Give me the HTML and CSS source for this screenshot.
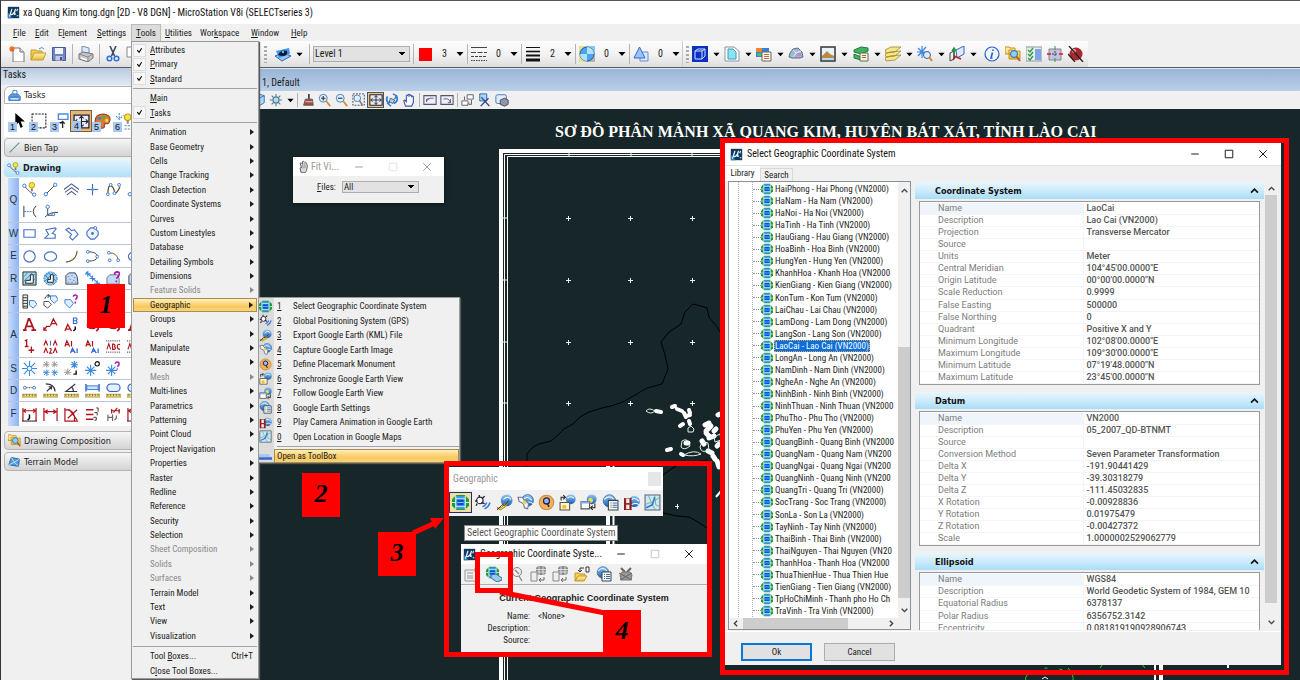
FILE: index.html
```html
<!DOCTYPE html>
<html lang="en">
<head>
<meta charset="utf-8">
<title>xa Quang Kim tong.dgn - MicroStation V8i</title>
<link rel="stylesheet" href="styles.css">
</head>
<body>
<svg class="defs" aria-hidden="true">
<defs>
<linearGradient id="gball" x1="0" y1="0" x2="0" y2="1"><stop offset="0" stop-color="#8fc8f4"/><stop offset="1" stop-color="#1c5fb4"/></linearGradient>
<linearGradient id="gyel" x1="0" y1="0" x2="0" y2="1"><stop offset="0" stop-color="#fff3b0"/><stop offset="1" stop-color="#e9b93a"/></linearGradient>
<symbol id="logo" viewBox="0 0 16 16"><path d="M1 1h14v14H1z" fill="#0f3a5f"/><path d="M1 15V8l6 7z" fill="#2f7fb5"/><path d="M3 13 6 3.500M6 4 4.500 9q0 2 2 1.500Q9 9 10.500 3.500L9 9.500q0 1.500 2 0M13 3.500l-1 3M12 12h2" fill="none" stroke="#e8f6ff" stroke-width="1.400"/></symbol>
<symbol id="globe" viewBox="0 0 16 16"><path d="M4 1h8l4 4v6l-4 4H4l-4-4V5z" fill="#1f9a3c"/><path d="M4 2h8v12H4z" fill="#3f9cf4"/><path d="M5 5h6v6H5z" fill="#0b4fd8"/><path d="M3.500 1.500v13M12.500 1.500v13M0 8h3M13 8h3M4 4.500h8M4 11.500h8" stroke="#d4f4f8" stroke-width="1"/><path d="M5 8h6" stroke="#7fc0ff"/></symbol>
<symbol id="earth" viewBox="0 0 16 16"><circle cx="8" cy="8" r="6.500" fill="url(#gball)" stroke="#1c5596"/><path d="M3 6q5-5 9 1M3 10q5-4 10 0" fill="none" stroke="#fff" stroke-width="1.300"/></symbol>
<symbol id="gps" viewBox="0 0 16 16"><circle cx="5.500" cy="6" r="3" fill="#fff" stroke="#334" stroke-width="1.200"/><path d="M1 7l2-1M8 4l2-2M5 3V1M3 9l-1 2M7 8l3 1" fill="none" stroke="#223" stroke-width="1.300"/><path d="M8 12q3-1 4-4M10 14q4-2 5-6" fill="none" stroke="#3a76d8" stroke-width="1.400"/></symbol>
<symbol id="kml" viewBox="0 0 16 16"><circle cx="10" cy="6" r="5.500" fill="url(#gball)"/><path d="M7 5q4-4 7 0" stroke="#fff" fill="none"/><path d="M1 13q5 1 6-3l4-2-2 4-5 3z" fill="#ffd93a" stroke="#9c7a10" stroke-width=".8"/><path d="M1 15l5-5 2 1 4-5" fill="none" stroke="#222" stroke-width=".8"/></symbol>
<symbol id="cap" viewBox="0 0 16 16"><circle cx="10" cy="6" r="5.500" fill="url(#gball)" stroke="#1c5596" stroke-width=".6"/><path d="M6 5q4-4 8 1M7 9q4-3 8 0" stroke="#fff" fill="none"/><path d="M1 3h4l2 3 4 3-1 5-3-1-1-4-4-2z" fill="#eef3fb" stroke="#678"/><circle cx="7" cy="8" r="1.800" fill="#f4d44a"/></symbol>
<symbol id="pin" viewBox="0 0 16 16"><circle cx="8" cy="8" r="6.800" fill="#f2b05a" stroke="#d08a34"/><circle cx="8" cy="6.500" r="2.800" fill="#9fb4e8" stroke="#18265c" stroke-width="1.200"/><path d="M8.500 9l2 3" stroke="#18265c" stroke-width="1.300"/></symbol>
<symbol id="sync" viewBox="0 0 16 16"><circle cx="11" cy="5" r="4.600" fill="url(#gball)"/><path d="M8 4q3-3 6 0" stroke="#fff" fill="none"/><path d="M1 8h9v7H1z" fill="#fdf6c8" stroke="#555"/><circle cx="5" cy="12" r="2" fill="#f0c030"/><path d="M2 6V3h3M4 1l2 2-2 2" fill="none" stroke="#222"/></symbol>
<symbol id="follow" viewBox="0 0 16 16"><circle cx="11" cy="5" r="4.600" fill="url(#gball)"/><circle cx="10" cy="6" r="2.200" fill="#f6dc4c"/><path d="M1 7h8v7H1z" fill="#fff" stroke="#555"/><path d="M1 7h8v2H1z" fill="#8ab0e8"/><path d="M14 9v4h-3M12 11l-2 2 2 2" fill="none" stroke="#222"/></symbol>
<symbol id="gset" viewBox="0 0 16 16"><circle cx="7" cy="6.500" r="5.800" fill="url(#gball)" stroke="#1c5596" stroke-width=".6"/><path d="M2 5q5-5 9 0" stroke="#fff" fill="none"/><path d="M6 6h9v9H6z" fill="#fffbe0" stroke="#345"/><path d="M8 8.500h1M8 10.500h1M8 12.500h1M10 8.500h4M10 10.500h4M10 12.500h4" stroke="#36c"/></symbol>
<symbol id="film" viewBox="0 0 16 16"><circle cx="10.500" cy="7" r="5.300" fill="url(#gball)"/><path d="M7 6q4-4 8 1M8 10q4-2 7 0" stroke="#fff" fill="none"/><path d="M1 4h7v11H1z" fill="#b02020"/><path d="M3 4.500h3v4H3zM3 10h3v4H3z" fill="#eee"/><path d="M1.500 4v11M7.500 4v11" stroke="#222" stroke-dasharray="1 1"/></symbol>
<symbol id="gmap" viewBox="0 0 16 16"><path d="M1 1h14v14H1z" fill="#cfe6f8" stroke="#567"/><path d="M1 10 6 8l5 7M4 1l3 7 8-5M10 1l1 9 4 2" fill="none" stroke="#6aaa7a" stroke-width=".8"/><path d="M2 13l6-3 2-7" fill="none" stroke="#2d78d8" stroke-width="1.500"/></symbol>
<symbol id="tbx" viewBox="0 0 16 16"><path d="M0 5h16v7H0z" fill="#a9c5ee"/><path d="M0 9h16v3H0z" fill="#3a6ac0"/><path d="M13 4h3v4h-3z" fill="#dde"/></symbol>
<symbol id="new" viewBox="0 0 16 16"><path d="M4 2h7l4 4v10H4z" fill="#fff" stroke="#777"/><path d="M11 2v4h4" fill="#dde" stroke="#777"/><path d="M3 0v6M0 3h6M1 1l4 4M5 1 1 5" stroke="#f06a1a" stroke-width="1.200"/></symbol>
<symbol id="open" viewBox="0 0 16 16"><path d="M1 14V4h5l1 1h5v2" fill="#f3cf57" stroke="#c49a28"/><path d="M1 14 4 7h12l-3 7z" fill="url(#gyel)" stroke="#c49a28"/><path d="M9 3q3-3 5 0" fill="none" stroke="#5a87c8"/></symbol>
<symbol id="save" viewBox="0 0 16 16"><path d="M1.500 1.500h13v13h-13z" fill="#7285c6" stroke="#4b5a96"/><path d="M4 2h8v6H4z" fill="#f3f5fa"/><path d="M4.500 10h7v4.500h-7z" fill="#c6cbdd"/><path d="M9 11h2v3H9z" fill="#44507e"/></symbol>
<symbol id="print" viewBox="0 0 16 16"><path d="M4 7V0l7 2v5z" fill="#dbe9fb" stroke="#7a8aa0"/><path d="M1 8l4-2 10 2v4l-5 4-9-3z" fill="#c4c6ca" stroke="#777"/><path d="M1 8l9 3 5-3M10 11v5" fill="none" stroke="#888"/><path d="M3 12l6 2" stroke="#fff" stroke-width="1.500"/></symbol>
<symbol id="cut" viewBox="0 0 16 16"><path d="M5 0l4.500 10M11 0 6.500 10" stroke="#3c4a60" stroke-width="1.600"/><circle cx="4.500" cy="12.500" r="2.300" fill="none" stroke="#2a6fd8" stroke-width="1.500"/><circle cx="11.500" cy="12.500" r="2.300" fill="none" stroke="#2a6fd8" stroke-width="1.500"/></symbol>
<symbol id="copy" viewBox="0 0 16 16"><path d="M1 1h8v10H1zM6 5h8v10H6z" fill="#fff" stroke="#888"/></symbol>
<symbol id="modelv" viewBox="0 0 16 16"><path d="M0 10l8-3 8 3-9 5z" fill="#9cc5f4" stroke="#2a68c8"/><path d="M1 5l13-3 1 6-11 4z" fill="#3f96ea"/><path d="M3 9q3-6 9-4 1 4-3 5-4 0-6-1z" fill="#111a30"/><circle cx="8" cy="6" r="1.200" fill="#5cb8ff"/></symbol>
<symbol id="lstyle" viewBox="0 0 16 16"><path d="M0 1.500h16" stroke="#444"/><path d="M0 6.500h16" stroke="#444" stroke-dasharray="5 1.500"/><path d="M0 10.500h16" stroke="#444" stroke-dasharray="3 1"/><path d="M0 14.500h16" stroke="#444" stroke-dasharray="1.500 1"/></symbol>
<symbol id="lweight" viewBox="0 0 16 16"><path d="M1 1.500h14" stroke="#111"/><path d="M1 5.500h14" stroke="#111" stroke-width="1.600"/><path d="M1 9.500h14" stroke="#111" stroke-width="2"/><path d="M1 14h14" stroke="#111" stroke-width="3"/></symbol>
<symbol id="transp" viewBox="0 0 16 16"><path d="M0 0h16v16H0z" fill="#e8dc90"/><path d="M8 0h8v8H8z" fill="#8ec6f2"/><path d="M8 8h8v8H8z" fill="#b8b4a8"/><circle cx="8" cy="8" r="7" fill="#49a6ee" stroke="#1460a8"/><path d="M8 1a7 7 0 0 1 7 7H8zM8 15a7 7 0 0 1-7-7h7z" fill="#b4e0ff"/></symbol>
<symbol id="prio" viewBox="0 0 16 16"><path d="M7 6h8v9H7z" fill="#dbe8fb" stroke="#6b8fd0"/><path d="M6.500 1 12 12H1z" fill="#9cc4f4" stroke="#2e6cd0"/></symbol>
<symbol id="cube" viewBox="0 0 16 16"><path d="M0 0h16v16H0z" fill="#0c2fc4"/><path d="M3 5h7v8H3zM6 3h7v7l-3 3M10 5l3-2M3 5l3-2" fill="none" stroke="#cfe4ff"/></symbol>
<symbol id="page" viewBox="0 0 16 16"><path d="M1 1h9l5 4v10H1z" fill="#fff" stroke="#8a94a0"/><path d="M4 3h5l3 3v7H4z" fill="#8fe3ec" stroke="#3a9cc0"/></symbol>
<symbol id="refs" viewBox="0 0 16 16"><path d="M0 2h13v9H0z" fill="#3f7fd0"/><path d="M0 2h6v4H0z" fill="#e9863a"/><path d="M1 7h6v3H1z" fill="#52b86c"/><path d="M6 6h9v9H6z" fill="#fffbe0" stroke="#666"/><path d="M8 8.500h5M8 10.500h5M8 12.500h5" stroke="#c66"/></symbol>
<symbol id="cloud" viewBox="0 0 16 16"><path d="M1 11l1-4 3-4 5-1 4 4 1 5-3 1H4z" fill="#9db7ce" stroke="#5c6f8c"/><path d="M5 4l3 3 5-2M8 7l-3 4" fill="none" stroke="#e4f1fb"/><path d="M9 7h4v3H9z" fill="#c28ac8"/></symbol>
<symbol id="raster" viewBox="0 0 16 16"><path d="M1 1h14v14H1z" fill="#e8f4fb" stroke="#333" stroke-width="1.500"/><path d="M2 10 7 5l3 3 4 2v2H2z" fill="#b98b3a"/><path d="M2 12h12v2H2z" fill="#b8dcf4"/></symbol>
<symbol id="db" viewBox="0 0 16 16"><path d="M1 4l7-3 7 1v3L8 8 1 6zM1 8l7 3v3l-7-2z" fill="#3fb45c" stroke="#1e7a38"/><path d="M7 7h8v8H7z" fill="#fdf5c0" stroke="#666"/><path d="M9 9.500h4M9 11.500h4" stroke="#777"/></symbol>
<symbol id="levels" viewBox="0 0 16 16"><path d="M0 12l5-2 11-1-6 5-9 1zM0 8l5-2 11-1-6 5-9 1zM0 4l6-3 10 0-6 5-9 1z" fill="#f7e589" stroke="#9c8830" stroke-width=".8"/></symbol>
<symbol id="snap" viewBox="0 0 16 16"><path d="M5 0v12M0 6h12M1 2l9 9M9 1 1 10" stroke="#3a86e0" stroke-width="1.200"/><circle cx="10" cy="9" r="3.500" fill="#d8ecfb" stroke="#46608a"/><path d="M12.500 11.500 15 15" stroke="#d08a2a" stroke-width="2"/></symbol>
<symbol id="acs" viewBox="0 0 16 16"><path d="M7 4l8-4v8l-7 4z" fill="#dfeafc" stroke="#3a60d0"/><path d="M5 12V3M3 5l2-3 2 3" fill="none" stroke="#1d9a30" stroke-width="1.400"/><path d="M5 10l7 3M4 14l2-3" stroke="#c22" stroke-width="1.500"/><path d="M1 7l4-2v8l-4 2z" fill="none" stroke="#444"/></symbol>
<symbol id="info" viewBox="0 0 16 16"><circle cx="8" cy="8" r="7" fill="#eef5ff" stroke="#2a5fc4" stroke-width="1.200"/><path d="M9 3.500v1.500M8.500 6.500 7 12h1.500" fill="none" stroke="#2a5fc4" stroke-width="1.600"/></symbol>
<symbol id="search" viewBox="0 0 16 16"><path d="M0 1h4l1 1h5v6H0zM4 4h4l1 1h6v8H4z" fill="url(#gyel)" stroke="#c68f1c"/><circle cx="9" cy="8" r="3.500" fill="#8fd0f2" stroke="#2568b0"/><path d="M11.500 10.500 15 15" stroke="#b8621c" stroke-width="2"/></symbol>
<symbol id="opts" viewBox="0 0 16 16"><path d="M0 1h16v14H0z" fill="#e8eef0" stroke="#899"/><path d="M9 3h6v11H9z" fill="#7fa4e8"/><path d="M2 4l2 2 3-4M2 8l2 2 3-4M2 12l2 2 3-4" fill="none" stroke="#2e9a3a" stroke-width="1.300"/></symbol>
<symbol id="fence" viewBox="0 0 16 16"><path d="M2 3h12v11H2z" fill="#c4c0ea" stroke="#887"/><path d="M8 0v4M8 12v4" stroke="#2aa040"/><path d="M0 8h4M12 8h4" stroke="#d02020" stroke-width="1.500"/><path d="M8 5v6M5 8h6" stroke="#444" stroke-dasharray="2 1"/></symbol>
<symbol id="nored" viewBox="0 0 16 16"><circle cx="8" cy="8" r="6.500" fill="#a82832"/><circle cx="6" cy="5" r="2" fill="#f0a0a0"/><path d="M1 0l14 16M0 8l7 8" stroke="#222" stroke-width="1.300"/></symbol>
<symbol id="viewc" viewBox="0 0 16 16"><path d="M1 4l6-3 7 2v8l-6 4-7-2z" fill="#a9d4f5" stroke="#2a6cc0"/><path d="M1 4l7 2 6-3M8 6v9" fill="none" stroke="#2a6cc0"/></symbol>
<symbol id="sun" viewBox="0 0 16 16"><circle cx="8" cy="8" r="3.500" fill="#b9dcec" stroke="#527a94" stroke-width="1.300"/><path d="M8 1v3M8 12v3M1 8h3M12 8h3M3 3l2 2M11 11l2 2M13 3l-2 2M5 11l-2 2" stroke="#527a94" stroke-width="1.200"/></symbol>
<symbol id="brush" viewBox="0 0 16 16"><path d="M8 1h2v6H8z" fill="#444"/><path d="M5 7h8l1 7H3z" fill="#a84a3a" stroke="#555"/><path d="M5 10h8" stroke="#dde"/></symbol>
<symbol id="zin" viewBox="0 0 16 16"><circle cx="6" cy="6" r="4.500" fill="#dff0fb" stroke="#3c78b8"/><path d="M3.500 6h5M6 3.500v5" stroke="#333" stroke-width="1.300"/><path d="M9.500 9.500 14 15" stroke="#d88a38" stroke-width="2"/></symbol>
<symbol id="zout" viewBox="0 0 16 16"><circle cx="6" cy="6" r="4.500" fill="#dff0fb" stroke="#3c78b8"/><path d="M3.500 6h5" stroke="#333" stroke-width="1.300"/><path d="M9.500 9.500 14 15" stroke="#d88a38" stroke-width="2"/></symbol>
<symbol id="zwin" viewBox="0 0 16 16"><path d="M1 1h13v13H1z" fill="none" stroke="#333" stroke-dasharray="2 1.500"/><circle cx="6" cy="6" r="3.800" fill="#dff0fb" stroke="#3c78b8"/><path d="M8.500 8.500 12 14" stroke="#888" stroke-width="2"/></symbol>
<symbol id="fit" viewBox="0 0 16 16"><path d="M1 2h14v12H1z" fill="#e9ecf4" stroke="#223" stroke-width="1.200"/><path d="M8 3v10M2 8h12M6 5l2-2 2 2M6 11l2 2 2-2M4 6 2 8l2 2M12 6l2 2-2 2" fill="none" stroke="#223"/></symbol>
<symbol id="rot" viewBox="0 0 16 16"><path d="M3 4q-3 5 2 8M13 3q3 6-3 9" fill="none" stroke="#2f7cd8" stroke-width="2"/><path d="M9 1l4 2-2 4M7 15l-4-3 4-3" fill="none" stroke="#2f7cd8" stroke-width="1.500"/><path d="M6 6l5 2-2 4-4-2z" fill="#a9d4f5" stroke="#456"/></symbol>
<symbol id="hand" viewBox="0 0 16 16"><path d="M4 15 2 9l1-1 2 2V3q1-1 2 0V2q1-1 2 0v1q1-1 2 0v1q1-1 2 0v7l-2 4z" fill="#f4f8ff" stroke="#4558b0" stroke-width="1.300"/></symbol>
<symbol id="handg" viewBox="0 0 16 16"><path d="M6 15l-1-5 1-1 1 1-2-6q1-1 2 0l1 1V2q1-1 2 0l1 1q1-1 2 1l1 3-1 6-2 3z" fill="#d8d8d8" stroke="#666" stroke-width="1.200"/><path d="M8 5l1 5M11 4v6" stroke="#888"/></symbol>
<symbol id="vprev" viewBox="0 0 16 16"><path d="M1 3h14v10H1z" fill="#eef" stroke="#556" stroke-width="1.200"/><path d="M4 10V7h3M4 10q1-5 8-4" fill="none" stroke="#556"/></symbol>
<symbol id="vnext" viewBox="0 0 16 16"><path d="M1 3h14v10H1z" fill="#eef" stroke="#556" stroke-width="1.200"/><path d="M12 7v4H9M12 11Q10 5 4 7" fill="none" stroke="#556"/></symbol>
<symbol id="vcopy" viewBox="0 0 16 16"><path d="M1 9h7v5H1zM7 2h7v5H7z" fill="#fff" stroke="#556"/><path d="M4 8V4M12 8v5H9M10 11l-2 2" fill="none" stroke="#556"/></symbol>
<symbol id="clip" viewBox="0 0 16 16"><path d="M2 1h8v8H2z" fill="#a9d4f5" stroke="#2a5ca8"/><path d="M4 5l9 10M12 6l-9 9" stroke="#29408a" stroke-width="1.500"/></symbol>
<symbol id="mask" viewBox="0 0 16 16"><rect x="1" y="2" width="12" height="10" rx="2" fill="#e0ecfb" stroke="#3a6cc0"/><path d="M6 8l5-2 4 2v5l-4 2-5-2z" fill="#8f98a6" stroke="#445"/></symbol>
<symbol id="cursor" viewBox="0 0 16 16"><path d="M5 0v12l3-3 2 5 2-1-2-5h4z" fill="#000"/></symbol>
<symbol id="fenc" viewBox="0 0 16 16"><path d="M1 1h13v13H1z" fill="none" stroke="#222" stroke-dasharray="2 1"/></symbol>
<symbol id="manip" viewBox="0 0 16 16"><path d="M6 1h9v5H6z" fill="#fff" stroke="#4a8cd8" stroke-width="1.300"/><path d="M7 9h4M10 14V8M8 10l2-2 2 2" fill="none" stroke="#222" stroke-width="1.200"/></symbol>
<symbol id="palette" viewBox="0 0 16 16"><path d="M1 8q0-7 8-7 7 1 6 6-1 4-4 3-2 0-1 3-1 2-4 1-5-1-5-6z" fill="#d9793a" stroke="#8a4420"/><circle cx="5" cy="5" r="1.500" fill="#38c"/><circle cx="9" cy="4" r="1.500" fill="#4b4"/><circle cx="12" cy="7" r="1.500" fill="#fd4"/></symbol>
<symbol id="bulb" viewBox="0 0 16 16"><circle cx="12" cy="4" r="3" fill="#ffe23c" stroke="#b89a10"/><path d="M11 7h2v3h-2z" fill="#888"/><path d="M1 3l3 3 4-4M4 0v6M9 12h6M9 15h6" fill="none" stroke="#48c" stroke-dasharray="2 1"/></symbol>
<symbol id="tasks" viewBox="0 0 16 16"><path d="M1 9l3-3h8l3 3v5H1z" fill="#5c9be0" stroke="#2d68b8"/><path d="M6 6V2h5v4M3 10h10" fill="none" stroke="#2d68b8"/><path d="M3 11h10v2H3z" fill="#cfe4fa"/></symbol>
<symbol id="diag" viewBox="0 0 16 16"><path d="M2 14 14 2" stroke="#4f9a90" stroke-width="1.300"/></symbol>
<symbol id="smart" viewBox="0 0 16 16"><path d="M2 4l6 6 5 4" fill="none" stroke="#444"/><circle cx="2.500" cy="4" r="1.800" fill="#fff" stroke="#3a76e0"/><circle cx="13" cy="13.500" r="1.800" fill="#fff" stroke="#3a76e0"/><circle cx="10.500" cy="3.500" r="3" fill="#ffe23c" stroke="#b89a10"/><path d="M9.500 7h2v3h-2z" fill="#777"/></symbol>
<symbol id="line" viewBox="0 0 16 16"><path d="M3 13 13 3" stroke="#444"/><circle cx="3" cy="13" r="1.800" fill="#fff" stroke="#3a76e0"/><circle cx="13" cy="3" r="1.800" fill="#fff" stroke="#3a76e0"/></symbol>
<symbol id="multi" viewBox="0 0 16 16"><path d="M0 8l8-6 8 6M1 11l7-5 7 5M3 14l5-4 5 4" fill="none" stroke="#46587e" stroke-width="1.100"/></symbol>
<symbol id="point" viewBox="0 0 16 16"><path d="M8 2v12M2 8h12" stroke="#3a6ac0" stroke-width="1.200"/><path d="M6 8l2-2 2 2-2 2z" fill="#5a86d0"/></symbol>
<symbol id="curve" viewBox="0 0 16 16"><path d="M2 14Q2 3 5 4t4 6 6-5" fill="none" stroke="#5a4a20" stroke-width="1.300"/><g fill="#fff" stroke="#3a76e0"><circle cx="2" cy="13" r="1.500"/><circle cx="5" cy="3" r="1.500"/><circle cx="9" cy="12" r="1.500"/><circle cx="14" cy="3" r="1.500"/></g></symbol>
<symbol id="con" viewBox="0 0 16 16"><path d="M2 2v12" stroke="#333"/><path d="M2 8h8" stroke="#3a76e0" stroke-dasharray="2 1"/><path d="M15 2q-6 6 0 12" fill="none" stroke="#333"/></symbol>
<symbol id="perp" viewBox="0 0 16 16"><path d="M5 3v9M2 14q6-6 14-5M5 12h7" fill="none" stroke="#345"/><g fill="#fff" stroke="#3a76e0"><circle cx="5" cy="3" r="1.800"/><circle cx="11" cy="11" r="1.500"/></g></symbol>
<symbol id="rect" viewBox="0 0 16 16"><path d="M2 4h12v8H2z" fill="none" stroke="#4570c8" stroke-width="1.200"/></symbol>
<symbol id="shape" viewBox="0 0 16 16"><path d="M3 4l10-2 1 1-4 5 3 1v4H2l4-4z" fill="none" stroke="#4570c8" stroke-width="1.200"/></symbol>
<symbol id="ortho" viewBox="0 0 16 16"><path d="M2 4l3-2 3 3 3-1 4 5-6 6-3-3 2-3z" fill="none" stroke="#4570c8" stroke-width="1.200"/></symbol>
<symbol id="poly" viewBox="0 0 16 16"><path d="M6 2h4l4 4v4l-4 4H6l-4-4V6z" fill="#eef4ff" stroke="#4570c8" stroke-width="1.200"/><circle cx="8" cy="8" r="1.500" fill="#4570c8"/><circle cx="11" cy="2" r="1.500" fill="#fff" stroke="#4570c8"/></symbol>
<symbol id="circ" viewBox="0 0 16 16"><circle cx="8" cy="8" r="6" fill="#fff" stroke="#4570c8" stroke-width="1.200"/></symbol>
<symbol id="ell" viewBox="0 0 16 16"><ellipse cx="8" cy="8" rx="6.500" ry="5" fill="#fff" stroke="#4570c8" stroke-width="1.200"/></symbol>
<symbol id="arc" viewBox="0 0 16 16"><path d="M14 2q-1 11-12 12" fill="none" stroke="#6a5a28" stroke-width="1.200"/></symbol>
<symbol id="harc" viewBox="0 0 16 16"><path d="M3 3q10 0 10 5t-10 5" fill="none" stroke="#444"/><g fill="#fff" stroke="#3a76e0"><circle cx="3" cy="3" r="1.500"/><circle cx="13" cy="8" r="1.500"/><circle cx="3" cy="13" r="1.500"/></g></symbol>
<symbol id="qarc" viewBox="0 0 16 16"><path d="M3 4q9 0 10 8" fill="none" stroke="#6a5a28"/><g fill="#fff" stroke="#3a76e0"><circle cx="3" cy="4" r="1.500"/><circle cx="13" cy="12" r="1.500"/><circle cx="4" cy="12" r="1.500"/></g></symbol>
<symbol id="hatch" viewBox="0 0 16 16"><path d="M1 1h14v14H1z" fill="#a6dcea" stroke="#222"/><path d="M2 6l4-4M2 11l9-9M3 14 14 3M8 14l6-6" stroke="#3a80c8"/><path d="M9 4h3v9H4v-3h5z" fill="#fff" stroke="#222"/></symbol>
<symbol id="xhatch" viewBox="0 0 16 16"><circle cx="8" cy="8" r="7" fill="#9cd2f0" stroke="#2f6fc0" stroke-dasharray="2 1"/><path d="M2 6l4-4M2 11l9-9M3 14 14 3M2 4l9 10M6 2l8 9" stroke="#3a80c8"/><path d="M8 4h3v8H5v-3h3z" fill="#fff" stroke="#222"/></symbol>
<symbol id="patt" viewBox="0 0 16 16"><path d="M2 14V5l3-3h7l2 4 1 8z" fill="#c3daf2" stroke="#345"/><path d="M4 6h1M8 5h1M11 7h1M6 9h1M10 10h1M4 12h1M8 12h1M12 12h1" stroke="#3a6ac0"/></symbol>
<symbol id="lpatt" viewBox="0 0 16 16"><path d="M1 1l14 13M3 0v6M0 3h6M8 5v6M5 8h6M13 10v6M10 13h6" stroke="#3a86e0" stroke-width="1.200"/></symbol>
<symbol id="qpatt" viewBox="0 0 16 16"><path d="M1 14V7l3-3h8l2 4v6z" fill="#c3daf2" stroke="#678"/><path d="M9 4q0-3 3-3t2 3q0 2-3 4M11 10v2" fill="none" stroke="#a818b0" stroke-width="1.800"/></symbol>
<symbol id="tag1" viewBox="0 0 16 16"><path d="M1 1h5v14H1zM1 4h5M1 7h5M1 10h5M1 13h5" fill="#eee" stroke="#333"/><path d="M8 7h5l3 4-4 4-4-3z" fill="#dff0ff" stroke="#3a76e0"/></symbol>
<symbol id="tag2" viewBox="0 0 16 16"><path d="M1 8h5l3 3-4 4-4-3z" fill="#fff" stroke="#444"/><path d="M8 2h6l2 4-4 4-4-4z" fill="#dff0ff" stroke="#3a76e0"/><path d="M2 5q1-4 5-3M5 0l2 2-2 2" fill="none" stroke="#222"/></symbol>
<symbol id="tag3" viewBox="0 0 16 16"><path d="M1 6h6l3 4-4 5-5-5z" fill="#dff0ff" stroke="#3a76e0"/><path d="M10 3q0-2 2-2t2 2q0 2-2 3M12 8v2" fill="none" stroke="#a818b0" stroke-width="1.600"/></symbol>
<symbol id="ared" viewBox="0 0 16 16"><path d="M3 14 7 2h1l5 12M5 10h6M1 14h4M10 14h5" fill="none" stroke="#b0141c" stroke-width="1.800"/></symbol>
<symbol id="anote" viewBox="0 0 16 16"><path d="M8 9l3-7 4 7M9 7h4M8 10H4l-3 4M1 11v3h3" fill="none" stroke="#b0141c" stroke-width="1.400"/></symbol>
<symbol id="ab" viewBox="0 0 16 16"><path d="M1 15l3-7 4 7M2 13h4" fill="none" stroke="#b0141c" stroke-width="1.400"/><path d="M10 1v6h3q2-1 0-3 2-2 0-3zM10 4h3" fill="none" stroke="#2a62d8" stroke-width="1.100"/><path d="M12 10v3l-2 2" stroke="#111" stroke-width="1.600" fill="none"/></symbol>
<symbol id="cc" viewBox="0 0 16 16"><path d="M12 4Q5 1 3 7t8 5M14 10v3l-2 2" fill="none" stroke="#b0141c" stroke-width="1.800"/></symbol>
<symbol id="onep" viewBox="0 0 16 16"><path d="M3 2l2-1v7M3 8h4M10 8v7M7 12h6" fill="none" stroke="#b0141c" stroke-width="1.400"/></symbol>
<symbol id="a1a2" viewBox="0 0 16 16"><path d="M1 7l2-5 2 5M11 7l2-5 2 5" fill="none" stroke="#b0141c" stroke-width="1.200"/><path d="M1 15l2-5 2 5M7 10q3 0 1 3l-1 2h3M11 15l2-5 2 5" fill="none" stroke="#b0141c" stroke-width="1.200"/><path d="M8 2v5" stroke="#2a62d8"/></symbol>
<symbol id="a1b" viewBox="0 0 16 16"><path d="M1 8l2-6 3 6M2 6h3M8 2v6" fill="none" stroke="#b0141c" stroke-width="1.300"/><path d="M7 15l2-5 3 5M8 13h3M14 10v5" fill="none" stroke="#2a62d8" stroke-width="1.300"/></symbol>
<symbol id="abc" viewBox="0 0 16 16"><path d="M0 2h16M0 14h16" stroke="#222" stroke-dasharray="1 1"/><path d="M1 11l2-6 2 6M7 5v6h2q2-1 0-3 2-2-2-3M15 6q-3-1-3 2t3 3" fill="none" stroke="#b0141c" stroke-width="1.200"/></symbol>
<symbol id="star" viewBox="0 0 16 16"><path d="M8 0v16M0 8h16M2 2l12 12M14 2 2 14" stroke="#3a8ae0" stroke-width="1.200"/><circle cx="8" cy="8" r="2.500" fill="#e2f3ff" stroke="#3a8ae0"/></symbol>
<symbol id="star4" viewBox="0 0 16 16"><path d="M4 0v7M0 4h7M1 1l5 5M6 1 1 6M12 0v7M9 4h7M10 1l5 5M15 1l-5 5" stroke="#9a9690"/><path d="M4 9v7M0 12h7M1 10l5 5M6 10l-5 5M12 9v7M9 12h7M10 10l5 5M15 10l-5 5" stroke="#3a8ae0"/></symbol>
<symbol id="starc" viewBox="0 0 16 16"><path d="M11 0v8M7 4h8M8 1l6 6M14 1 8 7" stroke="#3a8ae0" stroke-width="1.200"/><path d="M4 8v7M0 12h8M1 9l6 6M7 9l-6 6" stroke="#9a9690"/><path d="M13 10v4h-3" fill="none" stroke="#111" stroke-width="1.500"/></symbol>
<symbol id="starq" viewBox="0 0 16 16"><path d="M6 4v12M0 10h12M2 6l8 8M10 6l-8 8" stroke="#3a8ae0" stroke-width="1.200"/><path d="M10 3q0-2 2-2t2 2q0 2-2 3M12 8v1" fill="none" stroke="#a818b0" stroke-width="1.600"/></symbol>
<symbol id="staro" viewBox="0 0 16 16"><path d="M6 4v12M0 10h12M2 6l8 8M10 6l-8 8" stroke="#3a8ae0" stroke-width="1.200"/><circle cx="13" cy="3" r="2.300" fill="none" stroke="#111" stroke-width="1.200"/></symbol>
<symbol id="ruler" viewBox="0 0 16 16"><path d="M0 12h16v3H0z" fill="#f6e27a" stroke="#b49a40"/><path d="M2 12v2M5 12v2M8 12v2M11 12v2M14 12v2" stroke="#765"/></symbol>
<symbol id="d1" viewBox="0 0 16 16"><use href="#ruler"/><path d="M4 5h8" stroke="#444" stroke-dasharray="2 1"/><g fill="#fff" stroke="#3a76e0"><circle cx="3" cy="5" r="1.500"/><circle cx="13" cy="5" r="1.500"/></g></symbol>
<symbol id="d2" viewBox="0 0 16 16"><use href="#ruler"/><path d="M3 1q9 0 10 8M4 9l5-5M9 7V4H6" fill="none" stroke="#334" stroke-width="1.300"/></symbol>
<symbol id="d3" viewBox="0 0 16 16"><use href="#ruler"/><path d="M12 1 2 9h12M8 4q2 2 2 5" fill="none" stroke="#334" stroke-width="1.200"/></symbol>
<symbol id="d4" viewBox="0 0 16 16"><use href="#ruler"/><path d="M1 1v8M15 1v8" stroke="#2a62c0" stroke-width="1.500"/><path d="M2 3h12v4H2z" fill="#cfe4fa" stroke="#3a76e0"/></symbol>
<symbol id="d5" viewBox="0 0 16 16"><use href="#ruler"/><rect x="1" y="1" width="14" height="8" rx="4" fill="#e4f0ff" stroke="#2a62c0" stroke-width="1.200"/></symbol>
<symbol id="f1" viewBox="0 0 16 16"><path d="M1 1v14M15 1v14M2 4h12M4 2 2 4l2 2M12 2l2 2-2 2" fill="none" stroke="#b0141c" stroke-width="1.300"/><path d="M8 8v4l-2 2" fill="none" stroke="#111" stroke-width="1.600"/><path d="M0 15h16" stroke="#111"/></symbol>
<symbol id="f2" viewBox="0 0 16 16"><path d="M1 1v14M15 1v14M2 5h12M5 3 2 5l3 2M11 3l3 2-3 2" fill="none" stroke="#b0141c" stroke-width="1.300"/></symbol>
<symbol id="f3" viewBox="0 0 16 16"><path d="M1 1v14h14M1 3h5l8 11M4 3q9 2 7 12M4 12 14 3" fill="none" stroke="#b0141c" stroke-width="1.300"/></symbol>
<symbol id="f4" viewBox="0 0 16 16"><path d="M1 3h8M1 8h8M1 13h8" stroke="#b0141c" stroke-width="1.500"/><path d="M12 1h2v4M10 6h3v3M9 11h3v3h-2" fill="none" stroke="#333"/></symbol>
<symbol id="f5" viewBox="0 0 16 16"><path d="M6 2v5M14 2v5M6 4h9M8 6l4-5" fill="none" stroke="#b0141c" stroke-width="1.300"/><path d="M2 8v7M7 8v7M2 11h5M11 9v3l-2 2" fill="none" stroke="#666" stroke-width="1.200"/></symbol>
<symbol id="terr" viewBox="0 0 16 16"><path d="M1 12 4 3l10 2-1 9z" fill="#4d9ad8" stroke="#1f5c9c"/><path d="M4 3l4 6 5 5M1 12l7-3 6-4" fill="none" stroke="#d4ecff"/></symbol>
<symbol id="pick" viewBox="0 0 16 16"><use href="#globe" width="13" height="13"/><path d="M5 9l5-1 6 4v2l-5 2-6-4z" fill="#9cc8ec" stroke="#356ca8"/></symbol>
<symbol id="gr1" viewBox="0 0 16 16"><path d="M1 4h11v11H1zM3 7h6M3 10h6M3 12h6M11 2h4v4h-4z" fill="#eee" stroke="#999"/></symbol>
<symbol id="gr2" viewBox="0 0 16 16"><circle cx="9" cy="6" r="4.500" fill="#eee" stroke="#888"/><path d="M5 9l-4 6M11 10l3 5M7 4l4 4" stroke="#888" stroke-width="1.300"/></symbol>
<symbol id="gr3" viewBox="0 0 16 16"><path d="M8 0h6l2 2v5l-2 2H8L6 7V2z" fill="#8a8a8a"/><path d="M6 3.500h10M6 6h10M9 0v9M13 0v9" stroke="#eee" stroke-width=".8"/><path d="M1 6h6v9H1z" fill="#eee" stroke="#888"/><path d="M9 14h5v-3M11 12l-2 2 2 2" fill="none" stroke="#666"/></symbol>
<symbol id="gr4" viewBox="0 0 16 16"><path d="M3 2l4 4M13 2 9 6" stroke="#666" stroke-width="2"/><path d="M4 6h8l2 3-1 5H3L2 9z" fill="#999" stroke="#777"/><path d="M1 7l13 7M14 7 2 14" stroke="#666"/></symbol>
<symbol id="fold2" viewBox="0 0 16 16"><path d="M1 15V7h4l1 1h5v3" fill="#f3cf57" stroke="#c49a28"/><path d="M1 15l3-5h9l-3 5z" fill="url(#gyel)" stroke="#c49a28"/><path d="M12 1h3v5h-3z" fill="#fff" stroke="#333"/><path d="M10 2H6v4M4 4l2 2 2-2" fill="none" stroke="#333"/></symbol>
<symbol id="min" viewBox="0 0 16 16"><path d="M2 8h12" stroke="currentColor" stroke-width="1.500"/></symbol>
<symbol id="max" viewBox="0 0 16 16"><path d="M2 2h12v12H2z" fill="none" stroke="currentColor" stroke-width="1.500"/></symbol>
<symbol id="cls" viewBox="0 0 16 16"><path d="M2 2l12 12M14 2 2 14" stroke="currentColor" stroke-width="1.500"/></symbol>
<symbol id="chev" viewBox="0 0 16 16"><path d="M3 11l5-5 5 5" fill="none" stroke="currentColor" stroke-width="2.500"/></symbol>
<symbol id="tri" viewBox="0 0 16 16"><path d="M1 4h14l-7 8z" fill="#000"/></symbol>
<symbol id="chk" viewBox="0 0 16 16"><path d="M3 7l4 5 6-9" fill="none" stroke="#000" stroke-width="2.500"/></symbol>
</defs>
</svg>

<div class="app">
  <header class="titlebar"><svg class="s12"><use href="#logo"/></svg><h1>xa Quang Kim tong.dgn [2D - V8 DGN] - MicroStation V8i (SELECTseries 3)</h1></header>
  <nav class="menubar">
    <button><u>F</u>ile</button><button><u>E</u>dit</button><button>E<u>l</u>ement</button><button><u>S</u>ettings</button><button class="on"><u>T</u>ools</button><button><u>U</u>tilities</button><button>Wor<u>k</u>space</button><button><u>W</u>indow</button><button><u>H</u>elp</button>
  </nav>
  <div class="toolbars">
    <div class="bar std"><button aria-label="New"><svg><use href="#new"/></svg></button><button aria-label="Open"><svg><use href="#open"/></svg></button><button aria-label="Save"><svg><use href="#save"/></svg></button><i class="sep"></i><button aria-label="Print"><svg><use href="#print"/></svg></button><i class="sep"></i><button aria-label="Cut"><svg><use href="#cut"/></svg></button><button aria-label="Copy"><svg><use href="#copy"/></svg></button></div>
    <div class="bar attr">
      <i class="grip"></i>
      <button class="dd" aria-label="Template"><svg><use href="#modelv"/></svg><svg class="s8"><use href="#tri"/></svg></button>
      <i class="sep"></i>
      <select aria-label="Active level"><option>Level 1</option></select>
      <i class="sep"></i>
      <button class="val" aria-label="Color"><b class="swatch"></b><span>3</span><svg class="s8"><use href="#tri"/></svg></button><i class="sep"></i>
      <button class="val" aria-label="Line style"><svg><use href="#lstyle"/></svg><span>0</span><svg class="s8"><use href="#tri"/></svg></button><i class="sep"></i>
      <button class="val" aria-label="Line weight"><svg><use href="#lweight"/></svg><span>2</span><svg class="s8"><use href="#tri"/></svg></button><i class="sep"></i>
      <button class="val" aria-label="Transparency"><svg><use href="#transp"/></svg><span>0</span><svg class="s8"><use href="#tri"/></svg></button><i class="sep"></i>
      <button class="val" aria-label="Priority"><svg><use href="#prio"/></svg><span>0</span><svg class="s8"><use href="#tri"/></svg></button>
    </div>
    <div class="bar prim">
      <i class="grip"></i>
      <div class="pairs">
        <button class="dd" aria-label="Models"><svg><use href="#cube"/></svg><svg class="s8"><use href="#tri"/></svg></button>
        <button class="dd" aria-label="Pages"><svg><use href="#page"/></svg><svg class="s8"><use href="#tri"/></svg></button>
        <button class="dd" aria-label="References"><svg><use href="#refs"/></svg><svg class="s8"><use href="#tri"/></svg></button>
        <button class="dd" aria-label="Point clouds"><svg><use href="#cloud"/></svg><svg class="s8"><use href="#tri"/></svg></button>
        <button class="dd" aria-label="Raster manager"><svg><use href="#raster"/></svg><svg class="s8"><use href="#tri"/></svg></button>
        <button class="dd" aria-label="Level manager"><svg><use href="#db"/></svg><svg class="s8"><use href="#tri"/></svg></button>
        <button class="dd" aria-label="Level display"><svg><use href="#levels"/></svg><svg class="s8"><use href="#tri"/></svg></button>
        <button class="dd" aria-label="Cells"><svg><use href="#snap"/></svg><svg class="s8"><use href="#tri"/></svg></button>
        <button class="dd" aria-label="Auxiliary coordinates"><svg><use href="#acs"/></svg><svg class="s8"><use href="#tri"/></svg></button>
      </div>
      <div class="singles"><button aria-label="Information"><svg><use href="#info"/></svg></button><button aria-label="Explorer"><svg><use href="#search"/></svg></button><button aria-label="Toggles"><svg><use href="#opts"/></svg></button><button aria-label="AccuDraw"><svg><use href="#fence"/></svg></button><button aria-label="Stop"><svg><use href="#nored"/></svg></button></div>
    </div>
  </div>

  <div class="work">
    <aside class="tasks">
      <h2 class="cap">Tasks</h2>
      <button class="task top"><svg><use href="#tasks"/></svg>Tasks</button>
      <div class="quick">
        <button aria-label="Select"><svg><use href="#cursor"/></svg><b>1</b></button><button aria-label="Fence"><svg><use href="#fenc"/></svg><b>2</b></button><button aria-label="Manipulate"><svg><use href="#manip"/></svg><b>3</b></button><button class="on" aria-label="View"><svg><use href="#fit"/></svg><b>4</b></button><button aria-label="Attributes"><svg><use href="#palette"/></svg><b>5</b></button><button aria-label="Groups"><svg><use href="#bulb"/></svg><b>6</b></button>
      </div>
      <button class="task"><svg><use href="#diag"/></svg>Bien Tap</button>
      <button class="task open"><svg><use href="#smart"/></svg>Drawing</button>
      <div class="draw">
        <section class="two"><h3>Q</h3><div><svg><use href="#smart"/></svg><svg><use href="#line"/></svg><svg><use href="#multi"/></svg><svg><use href="#point"/></svg><svg><use href="#curve"/></svg><svg><use href="#line"/></svg><svg><use href="#con"/></svg><svg><use href="#perp"/></svg></div></section>
        <section><h3>W</h3><div><svg><use href="#rect"/></svg><svg><use href="#shape"/></svg><svg><use href="#ortho"/></svg><svg><use href="#poly"/></svg></div></section>
        <section class="tall"><h3>E</h3><div><svg><use href="#circ"/></svg><svg><use href="#ell"/></svg><svg><use href="#arc"/></svg><svg><use href="#harc"/></svg><svg><use href="#qarc"/></svg><svg><use href="#ell"/></svg></div></section>
        <section><h3>R</h3><div><svg><use href="#hatch"/></svg><svg><use href="#xhatch"/></svg><svg><use href="#patt"/></svg><svg><use href="#lpatt"/></svg><svg><use href="#qpatt"/></svg><svg><use href="#patt"/></svg></div></section>
        <section class="tall"><h3>T</h3><div><svg><use href="#tag1"/></svg><svg><use href="#tag2"/></svg><svg><use href="#tag3"/></svg></div></section>
        <section class="two"><h3>A</h3><div><svg><use href="#ared"/></svg><svg><use href="#anote"/></svg><svg><use href="#ab"/></svg><svg><use href="#cc"/></svg><svg><use href="#cc"/></svg><svg><use href="#ared"/></svg><svg><use href="#onep"/></svg><svg><use href="#a1a2"/></svg><svg><use href="#a1b"/></svg><svg><use href="#a1b"/></svg><svg><use href="#abc"/></svg><svg><use href="#abc"/></svg></div></section>
        <section><h3>S</h3><div><svg><use href="#star"/></svg><svg><use href="#star4"/></svg><svg><use href="#starc"/></svg><svg><use href="#staro"/></svg><svg><use href="#starq"/></svg></div></section>
        <section><h3>D</h3><div><svg><use href="#d1"/></svg><svg><use href="#d2"/></svg><svg><use href="#d3"/></svg><svg><use href="#d4"/></svg><svg><use href="#d5"/></svg><svg><use href="#d5"/></svg></div></section>
        <section><h3>F</h3><div><svg><use href="#f1"/></svg><svg><use href="#f2"/></svg><svg><use href="#f3"/></svg><svg><use href="#f4"/></svg><svg><use href="#f5"/></svg><svg><use href="#f1"/></svg></div></section>
      </div>
      <button class="task"><svg><use href="#search"/></svg>Drawing Composition</button>
      <button class="task"><svg><use href="#terr"/></svg>Terrain Model</button>
    </aside>
    <main class="view">
      <h2 class="viewcap">1, Default</h2>
      <div class="viewbar">
        <button aria-label="View attributes"><svg><use href="#viewc"/></svg></button><button class="dd" aria-label="Display style"><svg><use href="#sun"/></svg><svg class="s8"><use href="#tri"/></svg></button><i class="sep"></i>
        <button aria-label="Update view"><svg><use href="#brush"/></svg></button><button aria-label="Zoom in"><svg><use href="#zin"/></svg></button><button aria-label="Zoom out"><svg><use href="#zout"/></svg></button><button aria-label="Window area"><svg><use href="#zwin"/></svg></button><button class="on" aria-label="Fit view"><svg><use href="#fit"/></svg></button><button aria-label="Rotate view"><svg><use href="#rot"/></svg></button><button aria-label="Pan view"><svg><use href="#hand"/></svg></button><i class="sep"></i>
        <button aria-label="View previous"><svg><use href="#vprev"/></svg></button><button aria-label="View next"><svg><use href="#vnext"/></svg></button><i class="sep"></i>
        <button aria-label="Copy view"><svg><use href="#vcopy"/></svg></button><button aria-label="Clip volume"><svg><use href="#clip"/></svg></button><button aria-label="Clip mask"><svg><use href="#mask"/></svg></button>
      </div>
      <div class="canvas">
        <p class="sheet" lang="vi">SƠ ĐỒ PHÂN MẢNH XÃ QUANG KIM, HUYỆN BÁT XÁT, TỈNH LÀO CAI</p>
        <svg class="map" viewBox="222 109 1078 571" preserveAspectRatio="xMinYMin slice" aria-hidden="true">
          <path d="M722 151H501V680" fill="none" stroke="#fff" stroke-width="4"/>
          <path d="M722 156.500H507.500V680M504.500 680V154.500H722" fill="none" stroke="#fff"/>
          <path d="M608 462v84M1161 660v20" stroke="#fff" stroke-width="4"/><path d="M613.500 462v84M1155 660v20M1228 664v4" stroke="#fff" stroke-width="2"/>
          <path d="M503 218h5M503 280h5M503 342h5M503 403h5M569 153v4M631 153v4M692 153v4" stroke="#dfe"/>
          <path d="M566 218.500h5M628 218.500h5M690 218.500h5M566 280.500h5M628 280.500h5M690 280.500h5M566 342.500h5M628 342.500h5M690 342.500h5M566 403.500h5M628 403.500h5M690 403.500h5M675 506.500h4" stroke="#e6f2f2"/>
          <path d="M568.500 216v5M630.500 216v5M692.500 216v5M568.500 278v5M630.500 278v5M692.500 278v5M568.500 340v5M630.500 340v5M692.500 340v5M568.500 401v5M630.500 401v5M692.500 401v5M677.500 504v5" stroke="#e6f2f2"/>
          <path d="M527 462v-8l6-7 6-3 12-3 7-6 6-6 9-5 7-7 9-5 13-4 9-2 12-4 12-7 12-7 15-4 6-15-3-14-4-13 7-9 13-9 4-12 8-8 8 2 6 2 2 9 8 10 6 9M527 462l-2 12M663 513l14 3 12 1 9 5 9 6M707 460l-30 5-14 10" fill="none" stroke="#000"/>
          <path d="M656 411l5 1M672 407l3-1M677 409l5 2M684 413l2 4M680 426l3-2M689 410l1 3M686 416l4-1M689 421l1 3M667 450l4-1M681 454l2 1" fill="none" stroke="#fff" stroke-width="4" stroke-linecap="round"/>
          <path d="M705 425l4-2M711 426l-5 5M706 433l3 3M716 429l-2 2M709 438l5-2M718 415l2-1M686 443l2 0M708 451l4 2M713 456l2 3M717 461l2 6M717 446l2-2M702 441l2 3" fill="none" stroke="#fff" stroke-width="5" stroke-linecap="round"/>
          <path d="M646 411q3-4 9 0-4 4-9 0zM691 426l3 3-1 3h-5v-4zM682 441q6-4 8 5-6 5-9 1zM684 455q10-6 17-1-7 3-17 1zM700 447q2-7 8-4l1 7q-8 4-9-3zM714 437l6-3 1 6-6 2z" fill="none" stroke="#dff3e6"/>
          <path d="M716 497l5-6" stroke="#fff" stroke-width="2"/>
          <path d="M1028 674q-4 4-2 7M1068 668q6 6 5 13M1100 668l4-6M1140 662l5 6" fill="none" stroke="#1fd02c"/><path d="M1030 672q18-8 40 0" fill="none" stroke="#1fd02c" stroke-dasharray="3 12"/>
          <path d="M1042 679l3-2 3 2" fill="none" stroke="#fff"/>
        </svg>
      </div>
    </main>
  </div>
</div>

<section class="win fitview">
  <header><svg class="s12"><use href="#handg"/></svg><h2>Fit Vi...</h2><button aria-label="Minimize"><svg><use href="#min"/></svg></button><button class="off" aria-label="Maximize"><svg><use href="#max"/></svg></button><button aria-label="Close"><svg><use href="#cls"/></svg></button></header>
  <div class="fitbody"><label for="files"><u>F</u>iles:</label><select id="files"><option>All</option></select></div>
</section>

<div class="menu main" role="menu">
  <div class="grp"><button class="ck"><svg><use href="#chk"/></svg><span><u>A</u>ttributes</span></button><button class="ck"><svg><use href="#chk"/></svg><span><u>P</u>rimary</span></button><button class="ck"><svg><use href="#chk"/></svg><span><u>S</u>tandard</span></button></div>
  <hr>
  <div class="grp"><button><span><u>M</u>ain</span></button><button class="ck"><svg><use href="#chk"/></svg><span><u>T</u>asks</span></button></div>
  <hr>
  <div class="grp sub"><button>Animation</button><button>Base Geometry</button><button>Cells</button><button>Change Tracking</button><button>Clash Detection</button><button>Coordinate Systems</button><button>Curves</button><button>Custom Linestyles</button><button>Database</button><button>Detailing Symbols</button><button>Dimensions</button><button disabled>Feature Solids</button><button class="hot">Geographic</button><button>Groups</button><button>Levels</button><button>Manipulate</button><button>Measure</button><button disabled>Mesh</button><button>Multi-lines</button><button>Parametrics</button><button>Patterning</button><button>Point Cloud</button><button>Project Navigation</button><button>Properties</button><button>Raster</button><button>Redline</button><button>Reference</button><button>Security</button><button>Selection</button><button disabled>Sheet Composition</button><button disabled>Solids</button><button disabled>Surfaces</button><button>Terrain Model</button><button>Text</button><button>View</button><button>Visualization</button></div>
  <hr>
  <div class="grp"><button><span>Tool <u>B</u>oxes...</span><kbd>Ctrl+T</kbd></button><button><span>C<u>l</u>ose Tool Boxes...</span></button></div>
</div>

<div class="menu geo" role="menu">
  <div class="grp">
    <button><svg><use href="#globe"/></svg><u>1</u><span>Select Geographic Coordinate System</span></button>
    <button><svg><use href="#gps"/></svg><u>2</u><span>Global Positioning System (GPS)</span></button>
    <button><svg><use href="#kml"/></svg><u>3</u><span>Export Google Earth (KML) File</span></button>
    <button><svg><use href="#cap"/></svg><u>4</u><span>Capture Google Earth Image</span></button>
    <button><svg><use href="#pin"/></svg><u>5</u><span>Define Placemark Monument</span></button>
    <button><svg><use href="#sync"/></svg><u>6</u><span>Synchronize Google Earth View</span></button>
    <button><svg><use href="#follow"/></svg><u>7</u><span>Follow Google Earth View</span></button>
    <button><svg><use href="#gset"/></svg><u>8</u><span>Google Earth Settings</span></button>
    <button><svg><use href="#film"/></svg><u>9</u><span>Play Camera Animation in Google Earth</span></button>
    <button><svg><use href="#gmap"/></svg><u>0</u><span>Open Location in Google Maps</span></button>
  </div>
  <hr>
  <button class="openas"><svg><use href="#tbx"/></svg><span>Open as ToolBox</span></button>
</div>

<section class="win toolbox">
  <header><h2>Geographic</h2><button aria-label="Close"></button></header>
  <div class="tools"><button class="on" aria-label="Select Geographic Coordinate System"><svg><use href="#globe"/></svg></button><button aria-label="GPS"><svg><use href="#gps"/></svg></button><button aria-label="Export KML"><svg><use href="#kml"/></svg></button><button aria-label="Capture image"><svg><use href="#cap"/></svg></button><button aria-label="Define placemark"><svg><use href="#pin"/></svg></button><button aria-label="Synchronize"><svg><use href="#sync"/></svg></button><button aria-label="Follow"><svg><use href="#follow"/></svg></button><button aria-label="Settings"><svg><use href="#gset"/></svg></button><button aria-label="Play camera"><svg><use href="#film"/></svg></button><button aria-label="Google Maps"><svg><use href="#gmap"/></svg></button></div>
</section>
<div class="tip" role="tooltip">Select Geographic Coordinate System</div>

<section class="win current">
  <header><svg class="s12"><use href="#logo"/></svg><h2>Geographic Coordinate Syste...</h2><button aria-label="Minimize"><svg><use href="#min"/></svg></button><button class="off" aria-label="Maximize"><svg><use href="#max"/></svg></button><button aria-label="Close"><svg><use href="#cls"/></svg></button></header>
  <div class="tools"><button aria-label="Details"><svg><use href="#gr1"/></svg></button><button aria-label="From library"><svg><use href="#pick"/></svg></button><button aria-label="Search"><svg><use href="#gr2"/></svg></button><button aria-label="From reference"><svg><use href="#gr3"/></svg></button><button aria-label="To reference"><svg><use href="#gr3"/></svg></button><button aria-label="From file"><svg><use href="#fold2"/></svg></button><button aria-label="Edit"><svg><use href="#gset"/></svg></button><button aria-label="Delete"><svg><use href="#gr4"/></svg></button></div>
  <h3>Current Geographic Coordinate System</h3>
  <dl><dt>Name:</dt><dd>&lt;None&gt;</dd><dt>Description:</dt><dd></dd><dt>Source:</dt><dd></dd></dl>
</section>

<section class="win select">
  <header><svg class="s12"><use href="#logo"/></svg><h2>Select Geographic Coordinate System</h2><button aria-label="Minimize"><svg><use href="#min"/></svg></button><button aria-label="Maximize"><svg><use href="#max"/></svg></button><button aria-label="Close"><svg><use href="#cls"/></svg></button></header>
  <nav class="tabs"><button class="on">Library</button><button>Search</button></nav>
  <div class="panes">
    <div class="tree">
      <ul>
        <li><svg><use href="#globe"/></svg><span>HaiPhong - Hai Phong (VN2000)</span></li>
        <li><svg><use href="#globe"/></svg><span>HaNam - Ha Nam (VN2000)</span></li>
        <li><svg><use href="#globe"/></svg><span>HaNoi - Ha Noi (VN2000)</span></li>
        <li><svg><use href="#globe"/></svg><span>HaTinh - Ha Tinh (VN2000)</span></li>
        <li><svg><use href="#globe"/></svg><span>HauGiang - Hau Giang (VN2000)</span></li>
        <li><svg><use href="#globe"/></svg><span>HoaBinh - Hoa Binh (VN2000)</span></li>
        <li><svg><use href="#globe"/></svg><span>HungYen - Hung Yen (VN2000)</span></li>
        <li><svg><use href="#globe"/></svg><span>KhanhHoa - Khanh Hoa (VN2000</span></li>
        <li><svg><use href="#globe"/></svg><span>KienGiang - Kien Giang (VN2000)</span></li>
        <li><svg><use href="#globe"/></svg><span>KonTum - Kon Tum (VN2000)</span></li>
        <li><svg><use href="#globe"/></svg><span>LaiChau - Lai Chau (VN2000)</span></li>
        <li><svg><use href="#globe"/></svg><span>LamDong - Lam Dong (VN2000)</span></li>
        <li><svg><use href="#globe"/></svg><span>LangSon - Lang Son (VN2000)</span></li>
        <li class="sel"><svg><use href="#globe"/></svg><span>LaoCai - Lao Cai (VN2000)</span></li>
        <li><svg><use href="#globe"/></svg><span>LongAn - Long An (VN2000)</span></li>
        <li><svg><use href="#globe"/></svg><span>NamDinh - Nam Dinh (VN2000)</span></li>
        <li><svg><use href="#globe"/></svg><span>NgheAn - Nghe An (VN2000)</span></li>
        <li><svg><use href="#globe"/></svg><span>NinhBinh - Ninh Binh (VN2000)</span></li>
        <li><svg><use href="#globe"/></svg><span>NinhThuan - Ninh Thuan (VN2000</span></li>
        <li><svg><use href="#globe"/></svg><span>PhuTho - Phu Tho (VN2000)</span></li>
        <li><svg><use href="#globe"/></svg><span>PhuYen - Phu Yen (VN2000)</span></li>
        <li><svg><use href="#globe"/></svg><span>QuangBinh - Quang Binh (VN2000</span></li>
        <li><svg><use href="#globe"/></svg><span>QuangNam - Quang Nam (VN200</span></li>
        <li><svg><use href="#globe"/></svg><span>QuangNgai - Quang Ngai (VN200</span></li>
        <li><svg><use href="#globe"/></svg><span>QuangNinh - Quang Ninh (VN200</span></li>
        <li><svg><use href="#globe"/></svg><span>QuangTri - Quang Tri (VN2000)</span></li>
        <li><svg><use href="#globe"/></svg><span>SocTrang - Soc Trang (VN2000)</span></li>
        <li><svg><use href="#globe"/></svg><span>SonLa - Son La (VN2000)</span></li>
        <li><svg><use href="#globe"/></svg><span>TayNinh - Tay Ninh (VN2000)</span></li>
        <li><svg><use href="#globe"/></svg><span>ThaiBinh - Thai Binh (VN2000)</span></li>
        <li><svg><use href="#globe"/></svg><span>ThaiNguyen - Thai Nguyen (VN20</span></li>
        <li><svg><use href="#globe"/></svg><span>ThanhHoa - Thanh Hoa (VN2000</span></li>
        <li><svg><use href="#globe"/></svg><span>ThuaThienHue - Thua Thien Hue</span></li>
        <li><svg><use href="#globe"/></svg><span>TienGiang - Tien Giang (VN2000)</span></li>
        <li><svg><use href="#globe"/></svg><span>TpHoChiMinh - Thanh pho Ho Ch</span></li>
        <li><svg><use href="#globe"/></svg><span>TraVinh - Tra Vinh (VN2000)</span></li>
      </ul>
      <div class="vbar t"><svg><use href="#chev"/></svg><i></i><svg class="dn"><use href="#chev"/></svg></div>
      <div class="hbar"><svg class="lf"><use href="#chev"/></svg><i></i><svg class="rt"><use href="#chev"/></svg></div>
    </div>
    <div class="props">
      <div class="scroll">
        <h3>Coordinate System<svg><use href="#chev"/></svg></h3>
        <div class="box r15"><table>
          <tr><th>Name</th><td>LaoCai</td></tr><tr><th>Description</th><td>Lao Cai (VN2000)</td></tr><tr><th>Projection</th><td>Transverse Mercator</td></tr><tr><th>Source</th><td></td></tr><tr><th>Units</th><td>Meter</td></tr><tr><th>Central Meridian</th><td>104°45'00.0000"E</td></tr><tr><th>Origin Latitude</th><td>00°00'00.0000"N</td></tr><tr><th>Scale Reduction</th><td>0.9999</td></tr><tr><th>False Easting</th><td>500000</td></tr><tr><th>False Northing</th><td>0</td></tr><tr><th>Quadrant</th><td>Positive X and Y</td></tr><tr><th>Minimum Longitude</th><td>102°08'00.0000"E</td></tr><tr><th>Maximum Longitude</th><td>109°30'00.0000"E</td></tr><tr><th>Minimum Latitude</th><td>07°19'48.0000"N</td></tr><tr><th>Maximum Latitude</th><td>23°45'00.0000"N</td></tr>
        </table></div>
        <h3>Datum<svg><use href="#chev"/></svg></h3>
        <div class="box r11"><table>
          <tr><th>Name</th><td>VN2000</td></tr><tr><th>Description</th><td>05_2007_QD-BTNMT</td></tr><tr><th>Source</th><td></td></tr><tr><th>Conversion Method</th><td>Seven Parameter Transformation</td></tr><tr><th>Delta X</th><td>-191.90441429</td></tr><tr><th>Delta Y</th><td>-39.30318279</td></tr><tr><th>Delta Z</th><td>-111.45032835</td></tr><tr><th>X Rotation</th><td>-0.00928836</td></tr><tr><th>Y Rotation</th><td>0.01975479</td></tr><tr><th>Z Rotation</th><td>-0.00427372</td></tr><tr><th>Scale</th><td>1.0000002529062779</td></tr>
        </table></div>
        <h3>Ellipsoid<svg><use href="#chev"/></svg></h3>
        <div class="box r5"><table>
          <tr><th>Name</th><td>WGS84</td></tr><tr><th>Description</th><td>World Geodetic System of 1984, GEM 10</td></tr><tr><th>Equatorial Radius</th><td>6378137</td></tr><tr><th>Polar Radius</th><td>6356752.3142</td></tr><tr><th>Eccentricity</th><td>0.081819190928906743</td></tr>
        </table></div>
      </div>
      <div class="vbar p"><svg><use href="#chev"/></svg><i></i><svg class="dn"><use href="#chev"/></svg></div>
    </div>
  </div>
  <footer><button class="ok">Ok</button><button>Cancel</button></footer>
</section>

<div class="mark fr-a"></div><div class="mark fr-b"></div><div class="mark fr-c"></div>
<svg class="lines" viewBox="400 510 300 120" aria-hidden="true"><path d="M413 533l22-10" stroke="#f00" stroke-width="5"/><path d="M444 518l-14 0 5 11z" fill="#f00"/><path d="M500 592l105 21" stroke="#f00" stroke-width="5"/></svg>
<b class="step n1">1</b><b class="step n2">2</b><b class="step n3">3</b><b class="step n4">4</b>
</body>
</html>
```

FILE: styles.css
```css
:root {
  --ui: "Liberation Sans Narrow", "Roboto Condensed", Roboto, sans-serif;
  --pane: #f0f0f0;
}
* { box-sizing: border-box; }
body {
  margin: 0;
  height: 100vh;
  overflow: hidden;
  position: relative;
  background: #162629;
  color: #1c1c1c;
  font: 10px/14px var(--ui);
}
h1, h2, h3, p, ul, dl, dd { margin: 0; padding: 0; font-size: inherit; font-weight: normal; }
ul { list-style: none; }
button {
  display: flex;
  align-items: center;
  justify-content: center;
  padding: 0;
  border: 0;
  background: none;
  color: inherit;
  font: inherit;
  white-space: nowrap;
}
svg { display: block; flex: none; width: 16px; height: 16px; }
u { text-underline-offset: 1px; }
.defs { position: absolute; width: 0; height: 0; }
.s12 { width: 13px; height: 13px; }
.s8 { width: 7px; height: 7px; }
select {
  appearance: none;
  height: 16px;
  padding: 0 1px;
  border: 1px solid #adadad;
  border-radius: 0;
  background:
    linear-gradient(to top right, transparent 50%, #000 50%) right 7px center / 3px 4px no-repeat,
    linear-gradient(to top left, transparent 50%, #000 50%) right 4px center / 3px 4px no-repeat,
    #e2e2e2;
  color: inherit;
  font: inherit;
}

/* Application frame */
.app { display: flex; flex-direction: column; height: 100%; border-top: 1px solid #55565a; border-left: 1px solid #33343a; background: var(--pane); }
.titlebar { display: flex; align-items: center; gap: 3px; height: 23px; padding-left: 6px; background: #fff; color: #111; }
.menubar { display: grid; grid-template-columns: 22px 23px 39px 35px 33px 35px 51px 40px 30px; height: 17px; padding-left: 12px; background: var(--pane); font-size: 9px; }
.menubar button { justify-content: flex-start; }
.menubar .on { margin: 0 4px 0 -1px; border: 1px solid #bbb; border-bottom: 0; background: #dcdcdc; justify-content: center; }
.toolbars { display: flex; height: 27px; border-bottom: 1px solid #5a5a5e; }
.bar { display: flex; align-items: center; background: linear-gradient(#fdfdfd, #f1f1f1 55%, #dedede); }
.std { width: 263px; gap: 5px; padding-left: 8px; }
.attr { gap: 3px; padding-right: 2px; }
.attr select { width: 97px; }
.sep { width: 1px; height: 20px; background: #b4b4b4; }
.grip { width: 3px; height: 17px; background: repeating-linear-gradient(#aaa 0 2px, transparent 2px 4px); }
.dd { gap: 5px; }
.attr .dd { width: 35px; margin-left: 1px; }
.val { display: grid; grid-template-columns: 16px 1fr 8px; justify-items: center; width: 47px; }
.val .s8 { width: 8px; height: 8px; }
.swatch { width: 13px; height: 13px; background: #f00; }
.prim { padding: 0 4px 0 3px; border-left: 1px solid #ccc; gap: 3px; }
.pairs { display: grid; grid-template-columns: repeat(9, 1fr); width: 289px; }
.pairs .dd { justify-content: flex-start; }
.singles { display: flex; gap: 5px; }

/* Task pane */
.work { display: flex; flex: 1; min-height: 0; }
.tasks { flex: none; width: 221px; display: flex; flex-direction: column; background: var(--pane); font: 9px/12px "DejaVu Sans Condensed", "Open Sans", sans-serif; }
.cap { height: 17px; padding: 0 2px; background: linear-gradient(#b9cce0, #dfe9f3); font: 10px/13px var(--ui); }
.task { justify-content: flex-start; gap: 3px; height: 19px; margin: 1px 0 1px 3px; padding-left: 3px; border: 1px solid #b4b4b4; border-radius: 4px 0 0 4px; background: linear-gradient(#f6f6f6, #d4d4d4); flex: none; }
.task svg { width: 13px; height: 13px; }
.task.top { border-radius: 6px 0 0 0; background: #fff; margin: 1px 0 0 3px; height: 18px; }
.task.open { height: 18px; border: 0; background: linear-gradient(#e6f5fd, #b0e0f8); font-weight: bold; }
.quick { display: grid; grid-template-columns: repeat(6, 21px); height: 33px; padding: 6px 3px 5px; background: #fff; margin-left: 3px; }
.quick button { position: relative; width: 22px; height: 22px; }
.quick svg { width: 17px; height: 17px; }
.quick .on { border: 1px solid #7a6040; background: #e6b878; }
.quick b { position: absolute; left: 1px; bottom: 0; width: 9px; background: #a8c8f4; color: #111; font: 9px/10px "Liberation Sans", sans-serif; }
.draw { margin: 0 0 4px 7px; background: #fff; }
.draw section { display: grid; grid-template-columns: 11px 1fr; min-height: 22px; border-bottom: 1px solid #b9c6da; }
.draw .tall { min-height: 23px; }
.draw .two { min-height: 45px; }
.draw h3 { display: flex; align-items: center; justify-content: center; background: linear-gradient(90deg, #c8dcfb, #8fb4f2); font: 10px/12px "Liberation Sans", sans-serif; color: #234; }
.draw section div { display: grid; grid-template-columns: repeat(6, 21px); align-items: center; justify-items: center; }
.draw section:last-child { min-height: 24px; border: 0; }
.draw svg { width: 15px; height: 15px; }

/* View window */
.view { flex: 1; min-width: 0; display: flex; flex-direction: column; }
.viewcap { height: 23px; padding-left: 40px; border-top: 1px solid #dde6f0; background: linear-gradient(#9ab5d6, #b9cfe9); font-size: 10px; line-height: 27px; }
.viewbar { display: flex; align-items: center; gap: 3px; height: 18px; padding-left: 30px; background: var(--pane); }
.viewbar button { height: 16px; min-width: 14px; }
.viewbar svg { width: 14px; height: 14px; }
.viewbar .s8 { width: 7px; height: 7px; }
.viewbar .dd { gap: 4px; }
.viewbar .sep { height: 14px; }
.viewbar .on { width: 17px; margin: 0 -2px; border: 1px solid #46536c; background: #f0c878; }
.canvas { position: relative; flex: 1; min-height: 0; overflow: hidden; background: #162629; }
.map { position: absolute; inset: 0; width: 100%; height: 100%; }
.sheet { padding: 14px 0 0 333px; color: #fff; font: bold 16px/18px "Liberation Serif", serif; white-space: nowrap; }

/* Floating windows */
.win { position: absolute; background: var(--pane); }
.win header { display: flex; align-items: center; background: #fff; }
.win header h2 { flex: 1; min-width: 0; white-space: nowrap; }
.win header button svg { width: 10px; height: 10px; }
.win .off { opacity: .25; }
.fitview { left: 293px; top: 157px; width: 151px; height: 46px; color: #999; box-shadow: 0 1px 4px #0008; }
.fitview header { height: 19px; gap: 24px; padding: 0 12px 0 3px; }
.fitview header h2 { margin: 0 -12px 0 -22px; }
.fitbody { display: flex; align-items: center; gap: 6px; padding: 4px 0 0 24px; color: #1c1c1c; font-size: 9px; }
.fitbody select { width: 77px; height: 12px; line-height: 10px; }

.menu { position: absolute; background: var(--pane); border: 1px solid #9a9a9a; box-shadow: 1px 1px 1px #5a5a5a; font-size: 9px; }
.menu .grp { display: grid; grid-auto-rows: 1fr; }
.menu button { width: 100%; min-height: 0; justify-content: flex-start; line-height: 12px; }
.menu hr { width: 100%; height: 1px; margin: auto 0; border: 0; background: #a4a4a4; }
.main { left: 131px; top: 41px; width: 128px; height: 638px; display: grid; grid-template-rows: 43px 5px 29px 5px 518px 6px 29px; padding: 1px; }
.main .grp button { padding-left: 17px; }
.main .grp .ck { padding-left: 0; }
.ck svg { width: 13px; height: 13px; margin-right: 4px; padding: 2px; border: 1px solid #ddd; background: #f7f7f7; }
.menu button:disabled { color: #8a8a8a; }
.sub button::after { content: ""; margin: 0 3px 0 auto; border: 3px solid transparent; border-left: 4px solid currentColor; border-right: 0; }
.menu kbd { margin: 0 4px 0 auto; font: inherit; }
.main .hot, .openas span { border: 1px solid #a98c50; background: linear-gradient(#fff0bc, #f8c95e 60%, #f6d47c); }
.main .grp .hot { padding-left: 16px; }
.geo { left: 258px; top: 297px; width: 202px; height: 166px; display: grid; grid-template-rows: 145px 5px 14px; padding-top: 1px; background: linear-gradient(90deg, #dcdcdc 15px, var(--pane) 15px); }
.geo svg { width: 13px; height: 13px; margin-right: 5px; }
.geo u { width: 16px; text-align: left; }
.geo hr { margin-left: 18px; width: auto; }
.geo .openas svg { margin-right: 2px; }
.openas span { flex: 1; padding-left: 2px; text-align: left; line-height: 12px; }

.toolbox { left: 449px; top: 467px; width: 214px; height: 49px; }
.toolbox header { height: 23px; padding: 0 2px 0 4px; color: #999; }
.toolbox header button { width: 13px; height: 14px; background: #e6e6e6; }
.tools { display: flex; align-items: center; }
.toolbox .tools { height: 25px; }
.toolbox .tools button { flex: 1; height: 21px; }
.toolbox .tools .on { border: 1px solid #2a2a6a; background: #f0dfa0; }
.toolbox .tools svg { width: 17px; height: 17px; }
.tip { position: absolute; left: 464px; top: 525px; width: 154px; height: 16px; padding-left: 2px; border: 1px solid #888; background: #fff; color: #555; white-space: nowrap; }
.current { left: 461px; top: 544px; width: 246px; height: 108px; font-size: 9px; }
.current header { height: 20px; gap: 24px; padding: 0 13px 0 2px; color: #111; font-size: 10px; }
.current header h2 { margin: 0 -12px 0 -20px; }
.current .tools { height: 21px; gap: 6px; padding-left: 3px; border-bottom: 1px solid #b0b0b0; }
.current h3 { padding: 6px 0 5px; text-align: center; font: bold 9px/14px "Liberation Sans", sans-serif; }
.current dl { display: grid; grid-template-columns: 69px 1fr; gap: 0 8px; line-height: 12px; }
.current dt { text-align: right; }

.select { left: 725px; top: 143px; width: 556px; height: 522px; display: flex; flex-direction: column; font-size: 9px; }
.select header { height: 22px; gap: 24px; padding: 0 13px 0 5px; color: #111; font-size: 10px; }
.select header h2 { margin-left: -20px; }
.tabs { display: flex; align-items: flex-end; height: 16px; flex: none; border-top: 1px solid #e2e2e2; }
.tabs button { height: 13px; width: 33px; border: 1px solid #d8d8d8; border-bottom: 0; background: var(--pane); }
.tabs .on { height: 15px; width: 35px; background: #fff; border: 0; padding-bottom: 2px; }
.panes { flex: 1; min-height: 0; display: grid; grid-template-columns: 183px 1fr; gap: 4px; padding: 0 3px 1px; border-bottom: 1px solid #fff; }
.tree { display: grid; grid-template-columns: 1fr 12px; grid-template-rows: 1fr 11px; border: 1px solid #8a919c; background: #fff; }
.tree ul { display: grid; grid-auto-rows: 1fr; overflow: hidden; padding: 1px 0; background: repeating-linear-gradient(#b0b0b0 0 1px, transparent 1px 2px) 9px 0 / 1px no-repeat, repeating-linear-gradient(#b0b0b0 0 1px, transparent 1px 2px) 23px 0 / 1px no-repeat; }
.tree li { display: flex; align-items: center; gap: 1px; min-height: 0; padding-left: 32px; line-height: 12px; white-space: nowrap; }
.tree li::before { content: ""; width: 8px; margin: 0 -1px 0 -8px; border-top: 1px dotted #999; flex: none; }
.tree li svg { width: 12px; height: 12px; }
.tree li span { padding: 0 1px; }
.sel span { background: #0a6fd8; color: #fff; outline: 1px dotted #e0a060; outline-offset: -1px; }
.vbar { display: flex; flex-direction: column; align-items: center; background: var(--pane); color: #444; }
.vbar svg, .hbar svg { width: 9px; height: 9px; }
.vbar i { width: 100%; background: #cdcdcd; }
.t { padding: 4px 0 3px; }
.t i { height: 150px; margin: auto 0 40px; height: 150px; }
.vbar.t i { height: 251px; margin: 152px 0 auto; }
.dn { transform: rotate(180deg); }
.lf { transform: rotate(-90deg); }
.rt { transform: rotate(90deg); }
.hbar { display: flex; align-items: center; gap: 3px; padding: 0 2px; background: var(--pane); color: #444; }
.tree::after { content: ""; background: var(--pane); }
.hbar i { width: 105px; height: 11px; margin-right: auto; background: #cdcdcd; }
.props { display: grid; grid-template-columns: 1fr 12px; gap: 1px; min-height: 0; padding-right: 1px; font: 9px/12px Roboto, sans-serif; }
.scroll { overflow: hidden; min-height: 0; }
.props h3 { display: flex; align-items: center; justify-content: space-between; height: 17px; margin: 1px 0 2px; padding: 0 4px 0 20px; background: linear-gradient(#e9f6fe, #cdebfb 50%, #a9dcf7); font: bold 9px/12px "DejaVu Sans Condensed", "Open Sans", sans-serif; color: #111; }
.props h3 svg { width: 11px; height: 11px; }
.box { margin: 0 4px 7px; padding-top: 1px; border: 1px solid #9a9a9a; background: #fff; overflow: hidden; }
.r15 { height: 184px; }
.r11 { height: 135px; }
.r5 { height: 63px; margin-bottom: 0; border-bottom: 0; }
.box table { width: 100%; height: 100%; border-collapse: collapse; table-layout: fixed; }
.box th { width: 163px; padding: 0 0 0 18px; text-align: left; font-weight: normal; color: #7c7c7c; border-bottom: 1px solid #f4f6f9; line-height: 11px; }
.box td { height: 1px; padding: 0 0 0 3px; color: #555; font-weight: 500; white-space: nowrap; line-height: 11px; border: 1px solid #f1f5f9; border-width: 0 0 1px 1px; overflow: hidden; }
.box tr:first-child th { background: #f0f4fb; }
.p { padding: 3px 0; }
.p i { height: 408px; margin: 2px 0 auto; }
.select footer { display: flex; gap: 12px; height: 33px; padding: 11px 16px 4px; flex: none; }
.select footer button { width: 71px; height: 18px; border: 1px solid #adadad; background: #e1e1e1; }
.select footer .ok { border: 2px solid #0a78d7; }

/* Step annotations */
.mark { position: absolute; border: 5px solid #f00; pointer-events: none; }
.fr-a { left: 720px; top: 138px; width: 569px; height: 537px; }
.fr-b { left: 444px; top: 461px; width: 268px; height: 196px; }
.fr-c { left: 475px; top: 552px; width: 38px; height: 41px; }
.lines { position: absolute; left: 400px; top: 510px; width: 300px; height: 120px; pointer-events: none; }
.step { position: absolute; width: 38px; height: 44px; background: #f00; color: #000; font: italic bold 26px/42px "Liberation Serif", serif; text-align: center; }
.n1 { left: 87px; top: 284px; }
.n2 { left: 302px; top: 473px; }
.n3 { left: 378px; top: 532px; }
.n4 { left: 603px; top: 610px; }
```
